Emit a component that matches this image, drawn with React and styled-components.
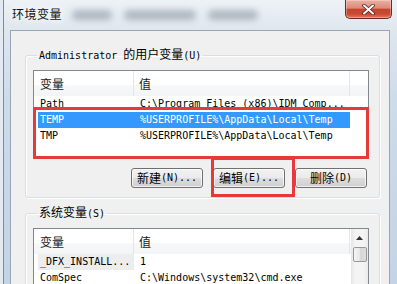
import React from 'react';
import styled, { createGlobalStyle } from 'styled-components';

const GlobalStyle = createGlobalStyle`
  html, body { margin: 0; padding: 0; }
  body {
    background: #e4eaf1;
    font-family: "DejaVu Sans Mono", "Noto Sans CJK SC", monospace;
  }
`;

const Screen = styled.div`
  position: relative;
  width: 397px;
  height: 284px;
  overflow: hidden;
  background: #e4eaf1;
`;

const Window = styled.div`
  margin-left: 3px;
  width: 394px;
  height: 284px;
  border-left: 1px solid #7b8ba0;
  background: linear-gradient(180deg, #eef2f6 0%, #dfe7ef 10%, #cddbea 35%, #c3d4e6 100%);
  display: flex;
  flex-direction: column;
`;

const TitleBar = styled.div`
  height: 30px;
  flex-shrink: 0;
  display: flex;
  align-items: flex-start;
  padding: 0 6px 0 8px;
`;

const Title = styled.div`
  font-family: "Noto Sans CJK SC", sans-serif;
  font-size: 12px;
  letter-spacing: 0.5px;
  line-height: 16px;
  margin-top: 6px;
  color: #111;
  text-shadow: 0 0 6px #fff, 0 0 10px #fff;
`;

const Haze = styled.div`
  display: flex;
  gap: 12px;
  margin: 10px 0 0 10px;
`;

const Blob = styled.span`
  width: ${p => p.$w}px;
  height: 10px;
  border-radius: 5px;
  background: rgba(95, 105, 120, 0.4);
  filter: blur(3px);
`;

const CloseBtn = styled.div`
  margin-left: auto;
  width: 47px;
  height: 19px;
  box-sizing: border-box;
  border: 1px solid #6b2a22;
  border-top: none;
  border-radius: 0 0 5px 5px;
  background: linear-gradient(180deg, #eab0a2 0%, #dc8a78 45%, #c5442d 52%, #c84a32 78%, #df7b60 100%);
  box-shadow: inset 0 0 0 1px rgba(255, 255, 255, 0.3);
  display: flex;
  align-items: center;
  justify-content: center;
`;

const Client = styled.div`
  margin-left: 6px;
  width: 380px;
  flex: 1;
  box-sizing: border-box;
  background: #f0f0f0;
  border: 1px solid #98a5b5;
  border-bottom: none;
  padding: 16px 0 0 14px;
  display: flex;
  flex-direction: column;
  gap: 7px;
`;

const GroupBox = styled.fieldset`
  margin: 0;
  padding: 7px 10px 9px 7px;
  width: 355px;
  min-inline-size: auto;
  box-sizing: border-box;
  border: 1px solid #d5dfe5;
  border-radius: 3px;
  box-shadow: inset 1px 1px 0 #fff, 1px 1px 0 #fff;
`;

const Legend = styled.legend`
  margin-left: 4px;
  padding: 0 2px;
  font-size: 10px;
  line-height: 14px;
  color: #000;
`;

const Cn = styled.span`
  font-family: "Noto Sans CJK SC", sans-serif;
  font-size: 12px;
`;

const ListView = styled.div`
  height: ${p => p.$h}px;
  box-sizing: border-box;
  border: 1px solid #828790;
  background: #fff;
  display: flex;
`;

const Table = styled.div`
  flex: 1;
  display: flex;
  flex-direction: column;
`;

const Header = styled.div`
  height: 25px;
  flex-shrink: 0;
  display: flex;
  background: linear-gradient(180deg, #fff 0%, #fff 55%, #f7f8f9 56%, #f3f4f6 100%);
`;

const HeaderCell = styled.div`
  width: ${p => (p.$w ? `${p.$w}px` : 'auto')};
  flex: ${p => (p.$w ? 'none' : 1)};
  box-sizing: border-box;
  padding-left: ${p => p.$pad || 0}px;
  border-right: ${p => (p.$w ? '1px solid #e3e5e8' : 'none')};
  display: flex;
  align-items: center;
  color: #1b1b1b;
`;

const Row = styled.div`
  display: flex;
  margin-left: 4px;
  width: 312px;
  height: 16px;
  line-height: 16px;
  font-size: 10px;
  white-space: nowrap;
  color: ${p => (p.$selected ? '#fff' : '#000')};
  background: ${p => (p.$selected ? '#3399ff' : 'transparent')};
`;

const Cell = styled.div`
  width: ${p => (p.$first ? '96px' : 'auto')};
  flex: ${p => (p.$first ? 'none' : 1)};
  box-sizing: border-box;
  padding-left: ${p => (p.$first ? 2 : 6)}px;
  overflow: hidden;
  background: ${p => (p.$muted ? '#ededed' : 'transparent')};
`;

const ButtonRow = styled.div`
  display: flex;
  justify-content: flex-end;
  gap: 10px;
  margin-top: 10px;
  padding-right: 2px;
`;

const Button = styled.div`
  width: 72px;
  height: 20px;
  box-sizing: border-box;
  border: 1px solid #707070;
  border-radius: 3px;
  background: linear-gradient(180deg, #f2f2f2 0%, #ebebeb 48%, #dddddd 52%, #cfcfcf 100%);
  box-shadow: inset 0 0 0 1px rgba(255, 255, 255, 0.7);
  display: flex;
  align-items: center;
  justify-content: center;
  font-size: 10px;
  line-height: 16px;
  color: #000;
`;

const ScrollBar = styled.div`
  width: 17px;
  flex-shrink: 0;
  background: linear-gradient(90deg, #e6e6e6 0%, #f4f4f4 25%, #f4f4f4 75%, #eaeaea 100%);
  display: flex;
  flex-direction: column;
  align-items: center;
`;

const ArrowBtn = styled.div`
  width: 17px;
  height: 17px;
  display: flex;
  align-items: center;
  justify-content: center;
`;

const Thumb = styled.div`
  width: 14px;
  height: 15px;
  margin-top: 1px;
  box-sizing: border-box;
  border: 1px solid #979797;
  border-radius: 2px;
  background: linear-gradient(90deg, #f5f5f5 0%, #e6e6e6 50%, #d6d6d6 51%, #dedede 100%);
`;

const Mark = styled.div`
  position: absolute;
  left: ${p => p.$x}px;
  top: ${p => p.$y}px;
  width: ${p => p.$w}px;
  height: ${p => p.$h}px;
  box-sizing: border-box;
  border: 3px solid #e5393b;
  pointer-events: none;
`;

const userVars = [
  { name: 'Path', value: 'C:\\Program Files (x86)\\IDM Comp...' },
  { name: 'TEMP', value: '%USERPROFILE%\\AppData\\Local\\Temp', selected: true },
  { name: 'TMP', value: '%USERPROFILE%\\AppData\\Local\\Temp' },
];

const sysVars = [
  { name: '_DFX_INSTALL...', value: '1', muted: true },
  { name: 'ComSpec', value: 'C:\\Windows\\system32\\cmd.exe' },
];

const ListHeader = () => (
  <Header>
    <HeaderCell $w={100} $pad={6}><Cn>变量</Cn></HeaderCell>
    <HeaderCell $w={216} $pad={5}><Cn>值</Cn></HeaderCell>
    <HeaderCell />
  </Header>
);

const VarRows = ({ items }) =>
  items.map(v => (
    <Row key={v.name} $selected={v.selected}>
      <Cell $first $muted={v.muted}>{v.name}</Cell>
      <Cell>{v.value}</Cell>
    </Row>
  ));

const App = () => (
  <Screen>
    <GlobalStyle />
    <Window>
      <TitleBar>
        <Title>环境变量</Title>
        <Haze>
          <Blob $w={40} />
          <Blob $w={72} />
          <Blob $w={50} />
        </Haze>
        <CloseBtn>
          <svg width="13" height="11" viewBox="0 0 13 11">
            <path d="M2 1.5 L11 9.5 M11 1.5 L2 9.5" stroke="#5a1f18" strokeWidth="3.6" strokeLinecap="round" />
            <path d="M2 1.5 L11 9.5 M11 1.5 L2 9.5" stroke="#fff" strokeWidth="2" strokeLinecap="round" />
          </svg>
        </CloseBtn>
      </TitleBar>

      <Client>
        <GroupBox>
          <Legend>Administrator <Cn>的用户变量</Cn>(U)</Legend>
          <ListView $h={88}>
            <Table>
              <ListHeader />
              <VarRows items={userVars} />
            </Table>
          </ListView>
          <ButtonRow>
            <Button><Cn>新建</Cn>(N)...</Button>
            <Button><Cn>编辑</Cn>(E)...</Button>
            <Button><Cn>删除</Cn>(D)</Button>
          </ButtonRow>
        </GroupBox>

        <GroupBox>
          <Legend><Cn>系统变量</Cn>(S)</Legend>
          <ListView $h={120}>
            <Table>
              <ListHeader />
              <VarRows items={sysVars} />
            </Table>
            <ScrollBar>
              <ArrowBtn>
                <svg width="7" height="4" viewBox="0 0 7 4">
                  <path d="M0 4 L3.5 0 L7 4 Z" fill="#333" />
                </svg>
              </ArrowBtn>
              <Thumb />
            </ScrollBar>
          </ListView>
        </GroupBox>
      </Client>
    </Window>

    <Mark $x={33} $y={107} $w={336} $h={52} />
    <Mark $x={211} $y={157} $w={84} $h={40} />
  </Screen>
);

export default App;
